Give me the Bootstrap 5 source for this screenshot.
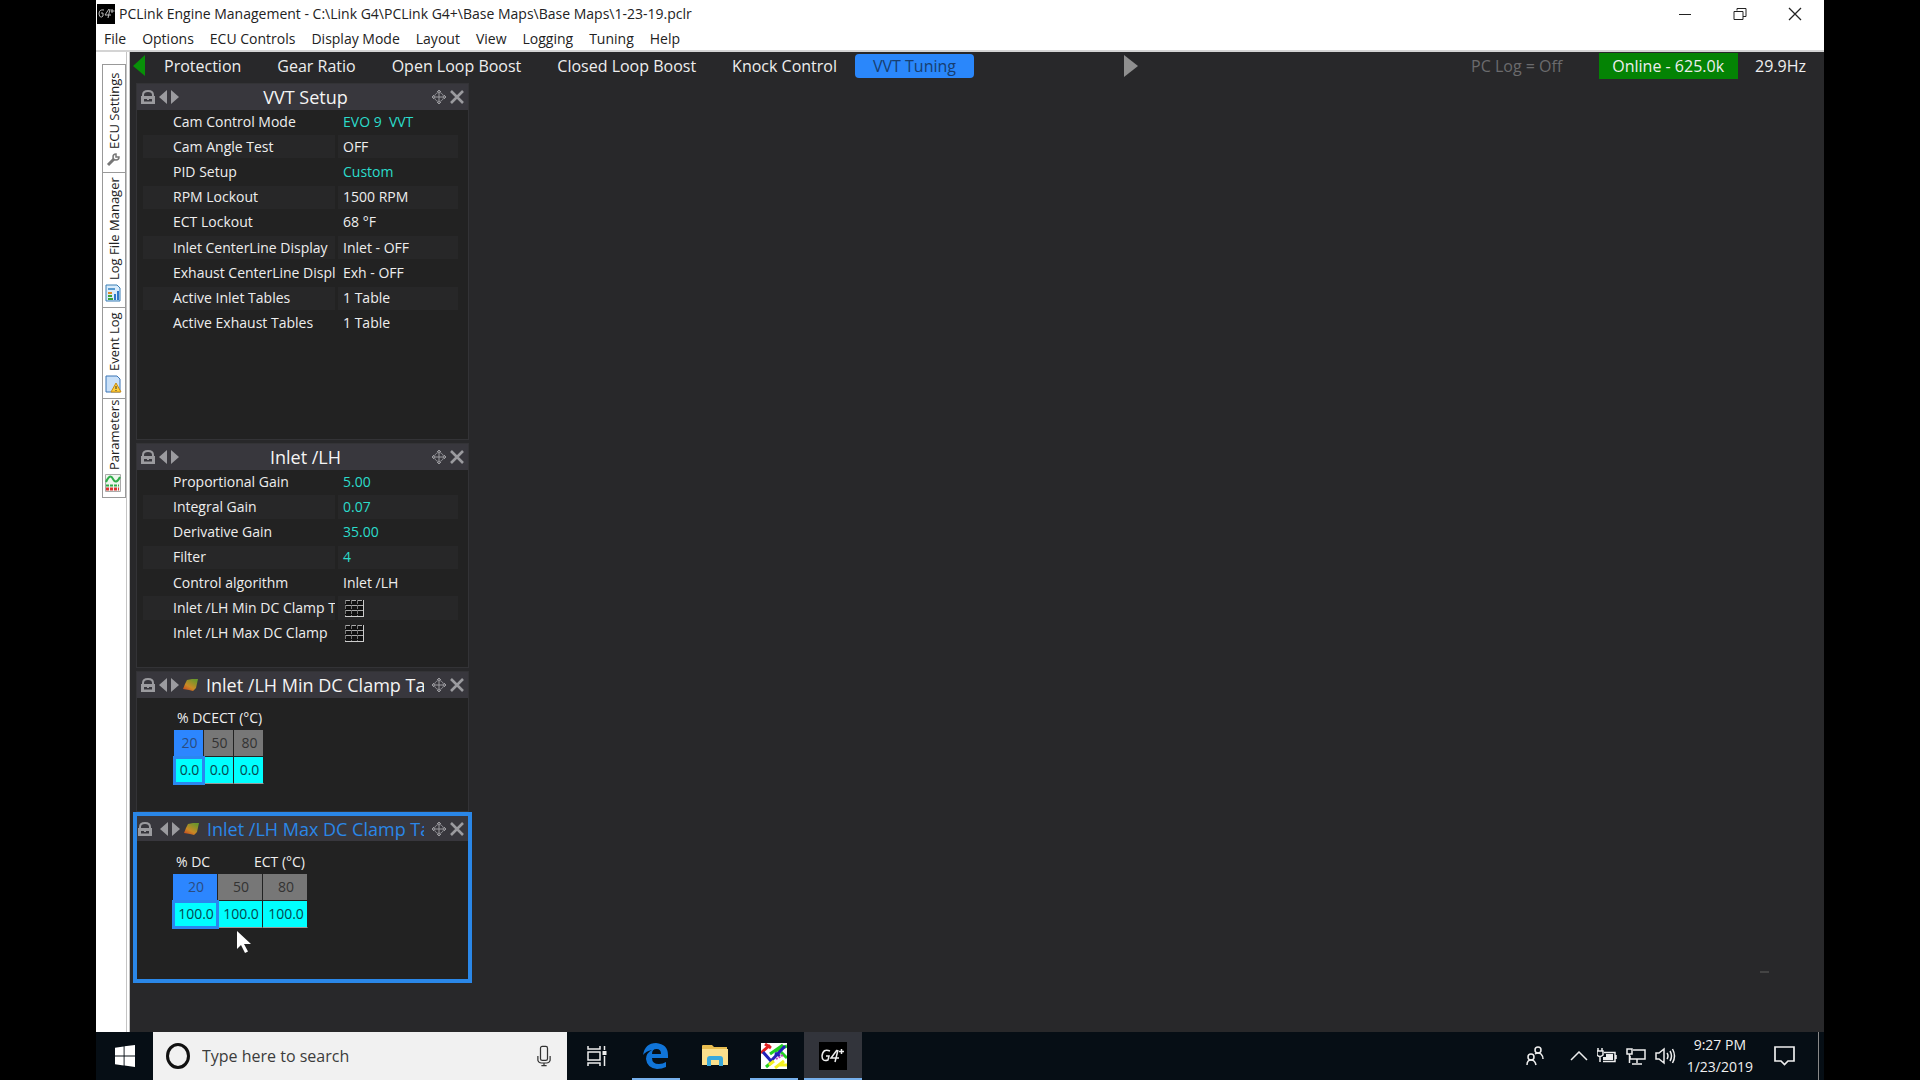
<!DOCTYPE html>
<html lang="en">
<head>
<meta charset="utf-8">
<meta name="viewport" content="width=device-width, initial-scale=1">
<title>PCLink Engine Management</title>
<link href="https://cdn.jsdelivr.net/npm/bootstrap@5.3.0/dist/css/bootstrap.min.css" rel="stylesheet">
<style>
  body { background: #000; font-family: "Open Sans", "Noto Sans", sans-serif; font-size: 14px; line-height: 20px; color: #eee; }
  button { font: inherit; color: inherit; background: none; border: 0; padding: 0; }
  svg { display: block; flex: none; }
  .desktop { margin: 0 5%; min-height: 100vh; }
  .app-head { background: #fff; color: #222; height: 52px; border-bottom: 2px solid #d4d4d4; }
  .title-row { height: 28px; padding-left: 1px; gap: 4px; }
  .win-btns { gap: 41px; padding-right: 22px; }
  .menu-row { gap: 16px; padding: 1px 0 0 8px; }
  .menu-row a { color: #222; text-decoration: none; }
  .side-rail { background: #fff; width: 34px; padding: 12px 0 0 6px; border-right: 4px double #c4c4c4; }
  .rail-tab { width: 24px; border: 1px solid #999; color: #222; font-size: 13px; line-height: 16px; white-space: nowrap; writing-mode: vertical-rl; transform: rotate(180deg); margin-bottom: -1px; padding: 5px 2px 4px 3px; gap: 4px; }
  .rail-tab svg { transform: rotate(180deg); }
  .rail-tab.h-ecu { height: 109px; } .rail-tab.h-log { height: 136px; } .rail-tab.h-event { height: 92px; } .rail-tab.h-param { height: 100px; }
  .workspace { background: #28282a; min-width: 0; }
  .page-bar { height: 31px; font-size: 16px; line-height: 24px; padding: 2px 18px 0 0; }
  .page-strip { width: 58%; }
  .page-strip .page-tab { padding: 0 18px; white-space: nowrap; border-radius: 4px; }
  .page-tab.active { background: #2a87fb; color: #173e70; }
  .log-state { color: #6b6b6d; margin-right: 37px; }
  .online { background: #048304; padding: 0 14px 0 13px; margin: -1px 17px 0 0; line-height: 26px; }
  .panes { width: 333px; margin-left: 6px; gap: 3px; }
  .pane { background: #222; border: 1px solid #333336; }
  .pane-bar { background: #38373d; color: #9b9b9f; height: 26px; padding: 0 4px; }
  .pane-title { color: #f4f4f4; font-size: 18px; line-height: 26px; font-weight: 400; margin: 0; white-space: nowrap; overflow: hidden; min-width: 0; }
  .pane-title.has-map { padding-left: 8px; }
  .pane-setup { min-height: 357px; } .pane-inlet { min-height: 225px; }
  .pane-min { min-height: 141px; } .pane-max { min-height: 171px; }
  .pane.selected { border: 4px solid #2a87e8; margin: -3px -3px 0 -3px; }
  .pane.selected .pane-bar { height: 25px; padding: 0 4px 0 1px; }
  .pane.selected .pane-title { color: #2a87e8; }
  .params { margin: 0 0 0 6px; width: 315px; table-layout: fixed; border-collapse: separate; border-spacing: 0; }
  .pane-setup .params { height: 227px; } .pane-inlet .params { height: 177px; }
  .params th, .params td { padding: 0; font-weight: 400; border-bottom: 2px solid #222; white-space: nowrap; overflow: hidden; }
  .params th { width: 195px; padding-left: 30px; border-right: 3px solid #222; }
  .params td { padding-left: 5px; }
  .params tr:nth-child(even) > * { background: #272728; background-clip: padding-box; }
  .params .changed { color: #2bdccb; }
  .clamp { margin-left: 37px; padding-top: 10px; }
  .selected .clamp { margin-left: 36px; padding-top: 11px; }
  .clamp-labels { padding: 0 3px; white-space: nowrap; }
  .clamp table { margin-top: 2px; text-align: center; border-collapse: separate; border-spacing: 0; }
  .clamp th, .clamp td { padding: 0 0 0 2px; height: 27px; font-weight: 400; border-right: 1px solid #222; color: #333; }
  .clamp th { background: #777; border-bottom: 1px solid #222; }
  .clamp td { background: #0ff; color: #04484e; border-bottom: 1px solid #999; }
  .clamp th.current { background: #2c86ff; color: #2b4c80; }
  .clamp td.current { outline: 3px solid #2a87f0; outline-offset: -2px; }
  .narrow th, .narrow td { width: 30px; } .wide th, .wide td { width: 45px; }
  .wide-labels { width: 135px; }
  .pointer { position: absolute; left: 100px; top: 115px; }
  .grip { width: 9px; height: 2px; background: #444; margin: 0 55px 59px auto; }
  .taskbar { background: #060e15; height: 48px; color: #f0f0f0; }
  .start-btn { width: 57px; }
  .search-box { width: 414px; background: #f1f1f1; color: #333; padding: 0 16px 0 12px; gap: 11px; }
  .search-box input { border: 0; background: none; font-size: 16px; color: #333; min-width: 0; outline: 0; padding: 0; }
  .search-box input::placeholder { color: #3c3c3c; opacity: 1; }
  .task-btn { width: 58px; margin-left: 1px; }
  .task-btn.running { background: linear-gradient(#76b0ec, #76b0ec) center bottom / 48px 2px no-repeat; }
  .task-btn.focused { background: #32343b; border-bottom: 2px solid #76b0ec; padding-top: 2px; }
  .tray { padding-right: 5px; }
  .tray-icons { gap: 9px; margin-left: 26px; }
  .clock { line-height: 22px; text-align: center; margin: 0 21px 0 11px; }
  .peek { width: 1px; background: #888; margin-left: 23px; }
</style>
<script src="https://cdn.jsdelivr.net/npm/bootstrap@5.3.0/dist/js/bootstrap.bundle.min.js"></script>
</head>
<body>
<svg width="0" height="0" class="position-absolute" aria-hidden="true">
  <symbol id="lock" viewBox="0 0 14 14"><path d="M2 7V5q0-4 5-4t5 4v2" fill="none" stroke="currentColor" stroke-width="2"/><path d="M0 6h14v8H0zM3 9v2.500h8V9H8v1H6V9z" fill="currentColor" fill-rule="evenodd"/></symbol>
  <symbol id="arrows" viewBox="0 0 20 14"><path d="M8 0v14L0 7zM12 0v14l8-7z" fill="currentColor"/></symbol>
  <symbol id="move" viewBox="0 0 14 14"><path d="M7 1v12M1 7h12M5 2l2-2 2 2M5 12l2 2 2-2M2 5L0 7l2 2M12 5l2 2-2 2" fill="none" stroke="currentColor"/><circle cx="7" cy="7" r="4.500" fill="none" stroke="currentColor" stroke-width=".8"/></symbol>
  <symbol id="close" viewBox="0 0 14 14"><path d="M1 1l12 12M13 1L1 13" stroke="currentColor" stroke-width="2.600"/></symbol>
  <symbol id="map3d" viewBox="0 0 15 14"><path d="M4 2l5-1 6 0-2 9-3 3-4-1-6-1 2-5z" fill="url(#heat)"/></symbol>
  <symbol id="grid" viewBox="0 0 19 17"><path d="M0 0h19v17H0z" fill="#111"/><path d="M0 .5h18M1 5.500h17M1 10.500h17" fill="none" stroke="#aaa" stroke-dasharray="5 1"/><path d="M.5 0v16M6.500 0v16M12.500 0v16" fill="none" stroke="#777" stroke-dasharray="4 1"/><path d="M0 16.500h19M18.500 0v17" fill="none" stroke="#ccc"/></symbol>
  <linearGradient id="heat" x1="0" y1="1" x2=".7" y2="0"><stop offset="0" stop-color="#c43a20"/><stop offset=".45" stop-color="#c98a25"/><stop offset="1" stop-color="#6c962c"/></linearGradient>
</svg>

<div class="desktop d-flex flex-column">
  <header class="app-head">
    <div class="title-row d-flex align-items-center">
      <svg width="18" height="22" viewBox="0 0 18 20"><path d="M0 0h18v20H0z" fill="#000"/><path d="M7 6q-5-1-5 4 1 5 4 2V9H4M12 5l-4 6h6M13 5l-2 9M15 5v4M13.500 7h4" fill="none" stroke="#bbb"/></svg>
      <span class="me-auto">PCLink Engine Management - C:\Link G4\PCLink G4+\Base Maps\Base Maps\1-23-19.pclr</span>
      <div class="win-btns d-flex align-items-center">
        <button aria-label="Minimize"><svg width="14" height="14"><path d="M1 7.500h12" stroke="#222"/></svg></button>
        <button aria-label="Restore"><svg width="14" height="14" viewBox="0 0 14 14" fill="none" stroke="#222"><path d="M4 3.500V1.500h9v8h-3"/><path d="M1 4.500h9v8H1z"/></svg></button>
        <button aria-label="Close"><svg width="14" height="14"><path d="M1 1l12 12M13 1L1 13" stroke="#222" stroke-width="1.300"/></svg></button>
      </div>
    </div>
    <nav class="menu-row d-flex align-items-center">
      <a href="#">File</a><a href="#">Options</a><a href="#">ECU Controls</a><a href="#">Display Mode</a><a href="#">Layout</a><a href="#">View</a><a href="#">Logging</a><a href="#">Tuning</a><a href="#">Help</a>
    </nav>
  </header>

  <div class="d-flex flex-grow-1">
    <aside class="side-rail d-flex flex-column flex-shrink-0">
      <button class="rail-tab h-ecu d-flex align-items-center">
        <svg width="14" height="14" viewBox="0 0 14 14"><path d="M2 12l6-6" stroke="#777" stroke-width="3"/><path d="M13 4a3 3 0 1 1-3-3v3z" fill="none" stroke="#777" stroke-width="1.500"/></svg>ECU Settings</button>
      <button class="rail-tab h-log d-flex align-items-center">
        <svg width="16" height="18" viewBox="0 0 16 18"><path d="M1 1h11l3 3v13H1z" fill="#d9ecfb" stroke="#3b7fb5"/><path d="M3 5h7" stroke="#5a9bd0" stroke-width="2"/><path d="M3 9h4" stroke="#e08a2c" stroke-width="2"/><path d="M3 12h4M3 15h5" stroke="#3aa33a" stroke-width="2"/><path d="M10 16V10M13 16V7" stroke="#2d78c9" stroke-width="2"/></svg>Log File Manager</button>
      <button class="rail-tab h-event d-flex align-items-center">
        <svg width="17" height="18" viewBox="0 0 17 18"><path d="M1 1h11l3 3v13H1z" fill="#c9e0f8" stroke="#3b74b5"/><path d="M11 8l5 9H6z" fill="#ffcf3a" stroke="#c98a10"/><path d="M11 11v3M11 15v1" stroke="#333"/></svg>Event Log</button>
      <button class="rail-tab h-param d-flex align-items-center">
        <svg width="16" height="18" viewBox="0 0 16 18"><path d="M.5.500h15v17H.5z" fill="#eef7ee" stroke="#aaa"/><path d="M1 8q4-9 7-3t7-2" fill="none" stroke="#2fae4a" stroke-width="2"/><path d="M1 11.500h13" stroke="#2fae4a" stroke-width="2" stroke-dasharray="3 1"/><path d="M1 15h13" stroke="#d33" stroke-width="3" stroke-dasharray="3 1"/></svg>Parameters</button>
    </aside>

    <main class="workspace flex-grow-1 d-flex flex-column">
      <div class="page-bar d-flex align-items-start">
        <button aria-label="Previous pages"><svg width="16" height="24" viewBox="0 0 16 24"><path d="M15 1v21L3 12z" fill="#089008"/></svg></button>
        <div class="page-strip d-flex">
          <button class="page-tab">Protection</button><button class="page-tab">Gear Ratio</button><button class="page-tab">Open Loop Boost</button><button class="page-tab">Closed Loop Boost</button><button class="page-tab">Knock Control</button><button class="page-tab active">VVT Tuning</button>
        </div>
        <button aria-label="Next pages" class="ms-1"><svg width="18" height="24" viewBox="0 0 18 24"><path d="M2 1v22l14-11z" fill="#8f8f8f"/></svg></button>
        <span class="log-state ms-auto">PC Log = Off</span>
        <span class="online">Online - 625.0k</span>
        <span>29.9Hz</span>
      </div>

      <div class="d-flex flex-grow-1">
        <div class="panes d-flex flex-column flex-shrink-0">
          <section class="pane pane-setup">
            <div class="pane-bar d-flex align-items-center">
              <svg width="14" height="14"><use href="#lock"/></svg><svg class="ms-1" width="20" height="14"><use href="#arrows"/></svg>
              <h2 class="pane-title flex-grow-1 text-center">VVT Setup</h2>
              <svg width="14" height="14"><use href="#move"/></svg><svg class="ms-1" width="14" height="14"><use href="#close"/></svg>
            </div>
            <table class="params">
              <tr><th scope="row">Cam Control Mode</th><td class="changed">EVO 9 &nbsp;VVT</td></tr>
              <tr><th scope="row">Cam Angle Test</th><td>OFF</td></tr>
              <tr><th scope="row">PID Setup</th><td class="changed">Custom</td></tr>
              <tr><th scope="row">RPM Lockout</th><td>1500 RPM</td></tr>
              <tr><th scope="row">ECT Lockout</th><td>68 °F</td></tr>
              <tr><th scope="row">Inlet CenterLine Display</th><td>Inlet - OFF</td></tr>
              <tr><th scope="row">Exhaust CenterLine Displ</th><td>Exh - OFF</td></tr>
              <tr><th scope="row">Active Inlet Tables</th><td>1 Table</td></tr>
              <tr><th scope="row">Active Exhaust Tables</th><td>1 Table</td></tr>
            </table>
          </section>

          <section class="pane pane-inlet">
            <div class="pane-bar d-flex align-items-center">
              <svg width="14" height="14"><use href="#lock"/></svg><svg class="ms-1" width="20" height="14"><use href="#arrows"/></svg>
              <h2 class="pane-title flex-grow-1 text-center">Inlet /LH</h2>
              <svg width="14" height="14"><use href="#move"/></svg><svg class="ms-1" width="14" height="14"><use href="#close"/></svg>
            </div>
            <table class="params">
              <tr><th scope="row">Proportional Gain</th><td class="changed">5.00</td></tr>
              <tr><th scope="row">Integral Gain</th><td class="changed">0.07</td></tr>
              <tr><th scope="row">Derivative Gain</th><td class="changed">35.00</td></tr>
              <tr><th scope="row">Filter</th><td class="changed">4</td></tr>
              <tr><th scope="row">Control algorithm</th><td>Inlet /LH</td></tr>
              <tr><th scope="row">Inlet /LH Min DC Clamp T</th><td><button class="d-block" aria-label="Open table"><svg width="21" height="17" viewBox="-2 0 21 17"><use href="#grid" width="19" height="17"/></svg></button></td></tr>
              <tr><th scope="row">Inlet /LH Max DC Clamp</th><td><button class="d-block" aria-label="Open table"><svg width="21" height="17" viewBox="-2 0 21 17"><use href="#grid" width="19" height="17"/></svg></button></td></tr>
            </table>
          </section>

          <section class="pane pane-min">
            <div class="pane-bar d-flex align-items-center">
              <svg width="14" height="14"><use href="#lock"/></svg><svg class="ms-1" width="20" height="14"><use href="#arrows"/></svg><svg class="ms-1" width="15" height="14"><use href="#map3d"/></svg>
              <h2 class="pane-title has-map flex-grow-1">Inlet /LH Min DC Clamp Table</h2>
              <svg class="ms-2" width="14" height="14"><use href="#move"/></svg><svg class="ms-1" width="14" height="14"><use href="#close"/></svg>
            </div>
            <div class="clamp">
              <div class="clamp-labels d-flex"><span>% DC</span><span>ECT (°C)</span></div>
              <table class="narrow">
                <tr><th class="current">20</th><th>50</th><th>80</th></tr>
                <tr><td class="current">0.0</td><td>0.0</td><td>0.0</td></tr>
              </table>
            </div>
          </section>

          <section class="pane pane-max selected position-relative">
            <div class="pane-bar d-flex align-items-center">
              <svg width="14" height="14"><use href="#lock"/></svg><svg class="ms-2" width="20" height="14"><use href="#arrows"/></svg><svg class="ms-1" width="15" height="14"><use href="#map3d"/></svg>
              <h2 class="pane-title has-map flex-grow-1">Inlet /LH Max DC Clamp Table</h2>
              <svg class="ms-2" width="14" height="14"><use href="#move"/></svg><svg class="ms-1" width="14" height="14"><use href="#close"/></svg>
            </div>
            <div class="clamp">
              <div class="clamp-labels wide-labels d-flex justify-content-between"><span>% DC</span><span>ECT (°C)</span></div>
              <table class="wide">
                <tr><th class="current">20</th><th>50</th><th>80</th></tr>
                <tr><td class="current">100.0</td><td>100.0</td><td>100.0</td></tr>
              </table>
            </div>
            <svg class="pointer" width="14" height="22" viewBox="0 0 14 22"><path d="M0 0v18l4-4 4 8 3-1.500-4-7.500h7z" fill="#fff"/></svg>
          </section>
        </div>
        <div class="grip align-self-end"></div>
      </div>
    </main>
  </div>

  <footer class="taskbar d-flex">
    <button class="start-btn d-flex align-items-center justify-content-center" aria-label="Start"><svg width="20" height="22" viewBox="0 0 22 24" fill="#fff"><path d="M0 3l9.500-1.500v10H0zM10.500 1.300L22 0v11.500H10.500zM0 12.500h9.500v10L0 21zM10.500 12.500H22V24l-11.500-1.500z"/></svg></button>
    <label class="search-box d-flex align-items-center">
      <svg width="26" height="28"><ellipse cx="13" cy="14" rx="10.500" ry="11.500" fill="none" stroke="#111" stroke-width="3"/></svg>
      <input class="flex-grow-1" type="search" placeholder="Type here to search" aria-label="Type here to search">
      <svg width="14" height="22" viewBox="0 0 16 24" fill="none" stroke="#333" stroke-width="1.400"><rect x="4" y="1" width="8" height="16" rx="2"/><path d="M1 12v5q1 3 4 3h6q3 0 4-3v-5M8 20v3M5 23h6"/></svg>
    </label>
    <button class="task-btn d-flex align-items-center justify-content-center" aria-label="Task View"><svg width="20" height="20" viewBox="0 0 20 20" fill="none" stroke="#eee" stroke-width="1.500"><path d="M1 0v3h12V0M1 20v-3h12v3M1 6h12v8H1zM17.500 0v4M17.500 10v10"/><path d="M15.500 5h4v4h-4z" fill="#eee" stroke="none"/></svg></button>
    <button class="task-btn running d-flex align-items-center justify-content-center" aria-label="Edge"><svg width="26" height="26" viewBox="0 0 26 26"><path d="M0 12Q2 0 13 0q12 1 12 12v3H9q0 6 7 6 4 0 7-2v5q-4 2-9 2Q4 25 3 16q0-6 6-9Q3 8 0 12zM9 11h9q0-5-4.500-5T9 11z" fill="#1074d8"/></svg></button>
    <button class="task-btn d-flex align-items-center justify-content-center" aria-label="File Explorer"><svg width="26" height="22" viewBox="0 0 26 22"><path d="M0 1q0-1 1-1h9l2 2h13v18H0z" fill="#e8bd50"/><path d="M0 4h26v16H0z" fill="#fbe08c"/><path d="M5 21v-7q0-3 3-3h10q3 0 3 3v7h-4v-6H9v6z" fill="#38a9dc"/></svg></button>
    <button class="task-btn running d-flex align-items-center justify-content-center" aria-label="Log viewer"><svg width="26" height="26" viewBox="0 0 26 26" fill="none" stroke-width="3"><path d="M0 0h26v26H0z" fill="#fff"/><path d="M0 10l9-8M4 1l6 4" stroke="#e02020"/><path d="M9 11L22 2M14 8L26 3M20 9l6 6M5 24l7-6" stroke="#22d022"/><path d="M2 9l8 9L24 3M14 10l5 3" stroke="#2222b8"/><path d="M14 25l9-7M18 22h8M8 22l5-4" stroke="#f4f020"/><path d="M15 16l7-4" stroke="#c040c0" stroke-width="2" stroke-dasharray="2 1"/></svg></button>
    <button class="task-btn focused d-flex align-items-center justify-content-center" aria-label="PCLink G4+"><svg width="28" height="28" viewBox="0 0 28 28"><path d="M0 0h28v28H0z" fill="#000"/><path d="M11 9Q4 6 3 14q0 6 6 4l1-4H7M18 8l-6 8h8M19 8l-3 12M22.500 7v5M20 9.500h5" fill="none" stroke="#eee" stroke-width="1.500"/></svg></button>

    <div class="tray ms-auto d-flex align-items-center align-self-stretch">
      <svg width="18" height="20" viewBox="0 0 18 20" fill="none" stroke="#eee" stroke-width="1.500"><circle cx="12" cy="4" r="3"/><circle cx="5" cy="11" r="3"/><path d="M1 19q0-5 4-5t5 5M9 8q3-2 6 0 2 2 2 5"/></svg>
      <div class="tray-icons d-flex align-items-center">
        <svg width="18" height="10"><path d="M1 9l8-8 8 8" fill="none" stroke="#eee" stroke-width="1.500"/></svg>
        <svg width="20" height="16" viewBox="0 0 20 16"><path d="M7 4.500h11v9H6M19 7v4" fill="none" stroke="#eee" stroke-width="1.500"/><path d="M9 6h7v6H6V9h3z" fill="#eee"/><path d="M0 3h6v4q-3 3-6 0zM1 0v3M5 0v3M3 8v6" fill="none" stroke="#eee" stroke-width="1.500"/></svg>
        <svg width="20" height="17" viewBox="0 0 20 17" fill="none" stroke="#eee" stroke-width="1.500"><path d="M7 2h12v9H4V8M11 11v4M6 16h10"/><path d="M1 1h5v5H1zM3.500 6v9"/></svg>
        <svg width="21" height="18" viewBox="0 0 21 18" fill="none" stroke="#eee" stroke-width="1.500"><path d="M1 6h3l5-4v14l-5-4H1zM12 6q2 3 0 6M15 4q3 5 0 10M17.500 2q4 7 0 14"/></svg>
      </div>
      <div class="clock">9:27 PM<br>1/23/2019</div>
      <svg width="21" height="20" viewBox="0 0 21 20" fill="none" stroke="#eee" stroke-width="1.700"><path d="M1 1h19v14h-6l-3.500 3.500L7 15H1z"/></svg>
      <div class="peek align-self-stretch"></div>
    </div>
  </footer>
</div>
</body>
</html>
